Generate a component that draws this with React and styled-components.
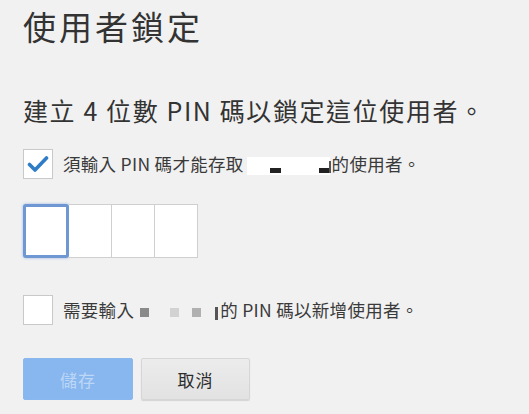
import React from "react";
import styled, { createGlobalStyle } from "styled-components";

const GlobalStyle = createGlobalStyle`
  html, body {
    margin: 0;
    padding: 0;
    background: #f1f1f1;
  }
  body {
    font-family: "Noto Sans CJK TC", "Noto Sans", sans-serif;
    color: #333;
  }
`;

const Page = styled.div`
  width: 529px;
  height: 414px;
  box-sizing: border-box;
  padding: 6px 0 0 23px;
  display: flex;
  flex-direction: column;
  overflow: hidden;
`;

const Title = styled.h1`
  margin: 0;
  font-size: 33px;
  font-weight: 400;
  line-height: 40px;
  letter-spacing: 3px;
  color: #333;
`;

const Subtitle = styled.h2`
  margin: 47px 0 0;
  font-size: 25px;
  font-weight: 400;
  line-height: 34px;
  letter-spacing: 1.6px;
  color: #333;
`;

const CheckRow = styled.label`
  display: flex;
  align-items: center;
  gap: 10px;
  margin-top: ${(p) => p.$top}px;
`;

const Box = styled.span`
  width: 30px;
  height: 30px;
  box-sizing: border-box;
  background: #fff;
  border: 1px solid #c9c9c9;
  display: flex;
  align-items: center;
  justify-content: center;
  flex-shrink: 0;
`;

const Label = styled.span`
  display: flex;
  align-items: center;
  font-size: 17.5px;
  line-height: 24px;
  letter-spacing: 0.3px;
  color: #3a3a3a;
  white-space: nowrap;
`;

const Hidden = styled.span`
  position: relative;
  display: inline-block;
  width: ${(p) => p.$w}px;
  height: 18px;
  margin-top: 4px;
`;

const Blank = styled.span`
  position: absolute;
  left: 3px;
  right: 2px;
  top: 0;
  bottom: 0;
  background: #fff;
`;

const Mark = styled.span`
  position: absolute;
  left: ${(p) => p.$x}px;
  bottom: ${(p) => p.$b || 2}px;
  width: ${(p) => p.$w || 10}px;
  height: ${(p) => p.$h || 5}px;
  background: ${(p) => p.$c};
`;

const PinRow = styled.div`
  display: flex;
  margin-top: 25px;
`;

const PinCell = styled.div`
  width: 43px;
  height: 54px;
  box-sizing: border-box;
  background: #fff;
  border: 1px solid #cfcfcf;
  border-left-width: 0;
  ${(p) =>
    p.$focus &&
    `
    width: 46px;
    border: 3px solid #6f98d2;
    border-radius: 3px;
    box-shadow: 0 0 3px rgba(90, 140, 220, 0.6);
  `}
`;

const Actions = styled.div`
  display: flex;
  gap: 8px;
  margin-top: 33px;
`;

const Button = styled.button`
  width: ${(p) => p.$w}px;
  height: 42px;
  border-radius: 2px;
  font-family: inherit;
  font-size: 17px;
  letter-spacing: 1px;
  border: 1px solid ${(p) => (p.$primary ? "#8ab8ee" : "#d6d6d6")};
  background: ${(p) =>
    p.$primary ? "#88b6ee" : "linear-gradient(#ececec, #e2e2e2)"};
  color: ${(p) => (p.$primary ? "#bcd6f6" : "#2c2c2c")};
  box-shadow: ${(p) => (p.$primary ? "none" : "0 1px 1px rgba(0,0,0,0.12)")};
`;

const Check = () => (
  <svg width="22" height="18" viewBox="0 0 22 18">
    <path
      d="M2.5 9.5 L8 15 L19.5 3"
      fill="none"
      stroke="#2f7cc7"
      strokeWidth="3.6"
      strokeLinecap="round"
      strokeLinejoin="round"
    />
  </svg>
);

export default function App() {
  return (
    <Page>
      <GlobalStyle />
      <Title>使用者鎖定</Title>
      <Subtitle>建立 4 位數 PIN 碼以鎖定這位使用者。</Subtitle>

      <CheckRow $top={22}>
        <Box>
          <Check />
        </Box>
        <Label>
          須輸入 PIN 碼才能存取
          <Hidden $w={88}>
            <Blank />
            <Mark $x={26} $w={11} $c="#222" />
            <Mark $x={75} $w={11} $c="#222" />
            <Mark $x={85} $w={2} $h={12} $c="#555" />
          </Hidden>
          的使用者。
        </Label>
      </CheckRow>

      <PinRow>
        <PinCell $focus />
        <PinCell />
        <PinCell />
        <PinCell />
      </PinRow>

      <CheckRow $top={37}>
        <Box />
        <Label>
          需要輸入
          <Hidden $w={86}>
            <Mark $x={6} $b={4} $w={9} $h={9} $c="#8a8a8a" />
            <Mark $x={36} $b={4} $w={9} $h={9} $c="#d2d2d2" />
            <Mark $x={58} $b={4} $w={9} $h={9} $c="#b0b0b0" />
            <Mark $x={81} $b={1} $w={3} $h={13} $c="#555" />
          </Hidden>
          的 PIN 碼以新增使用者。
        </Label>
      </CheckRow>

      <Actions>
        <Button $primary $w={110}>儲存</Button>
        <Button $w={109}>取消</Button>
      </Actions>
    </Page>
  );
}
